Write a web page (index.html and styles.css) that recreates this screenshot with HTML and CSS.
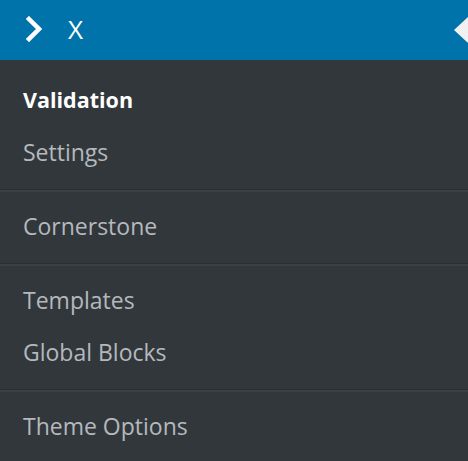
FILE: index.html
```
<!DOCTYPE html>
<html lang="en">
<head>
    <meta charset="UTF-8">
    <meta name="viewport" content="width=device-width, initial-scale=1.0">
    <title>X - Menu</title>
    <link rel="stylesheet" href="styles.css">
</head>
<body>
<!-- Заголовок меню -->
<div class="menu-head">
    <svg class="head-chevron" width="16" height="26" viewBox="0 0 16 26">
        <path d="M3 3 L13 13 L3 23" fill="none" stroke="#fff" stroke-width="4.5" stroke-linecap="square" stroke-linejoin="miter"/>
    </svg>
    <span class="head-title">X</span>
    <span class="head-pointer"></span>
</div>

<!-- Пункты меню -->
<div class="menu">
    <div class="menu-group first">
        <a class="menu-item current" href="#">Validation</a>
        <a class="menu-item" href="#">Settings</a>
    </div>
    <div class="menu-group">
        <a class="menu-item" href="#">Cornerstone</a>
    </div>
    <div class="menu-group">
        <a class="menu-item" href="#">Templates</a>
        <a class="menu-item" href="#">Global Blocks</a>
    </div>
    <div class="menu-group">
        <a class="menu-item" href="#">Theme Options</a>
    </div>
</div>
</body>
</html>
```
FILE: styles.css
```
/* Общий стиль для страницы */
body {
    margin: 0;
    background-color: #32373c;
    font-family: 'Open Sans', 'Noto Sans', sans-serif;
    min-height: 100vh;
}

/* Синяя шапка */
.menu-head {
    position: relative;
    height: 60px;
    background-color: #0073aa;
    display: flex;
    align-items: center;
    padding-left: 26px;
}

.head-chevron {
    display: block;
    margin-top: -2px;
}

.head-title {
    color: #fff;
    font-size: 26px;
    margin-left: 26px;
    line-height: 1;
    margin-top: -2px;
}

/* Белый треугольник справа */
.head-pointer {
    position: absolute;
    right: 0;
    top: 17px;
    width: 0;
    height: 0;
    border-top: 13px solid transparent;
    border-bottom: 13px solid transparent;
    border-right: 14px solid #f1f1f1;
}

/* Группы пунктов */
.menu-group {
    display: flex;
    flex-direction: column;
    padding: 10px 0 11px;
    border-top: 1px solid #2a2e32;
    box-shadow: inset 0 2px 0 #3b4045;
}

.menu-group.first {
    border-top: none;
    box-shadow: none;
    padding-top: 14px;
}

.menu-item {
    display: block;
    height: 52px;
    line-height: 52px;
    padding-left: 23px;
    font-size: 23px;
    color: #b4b9be;
    text-decoration: none;
}

.menu-item.current {
    color: #fff;
    font-weight: 700;
    font-size: 21.5px;
}
```
